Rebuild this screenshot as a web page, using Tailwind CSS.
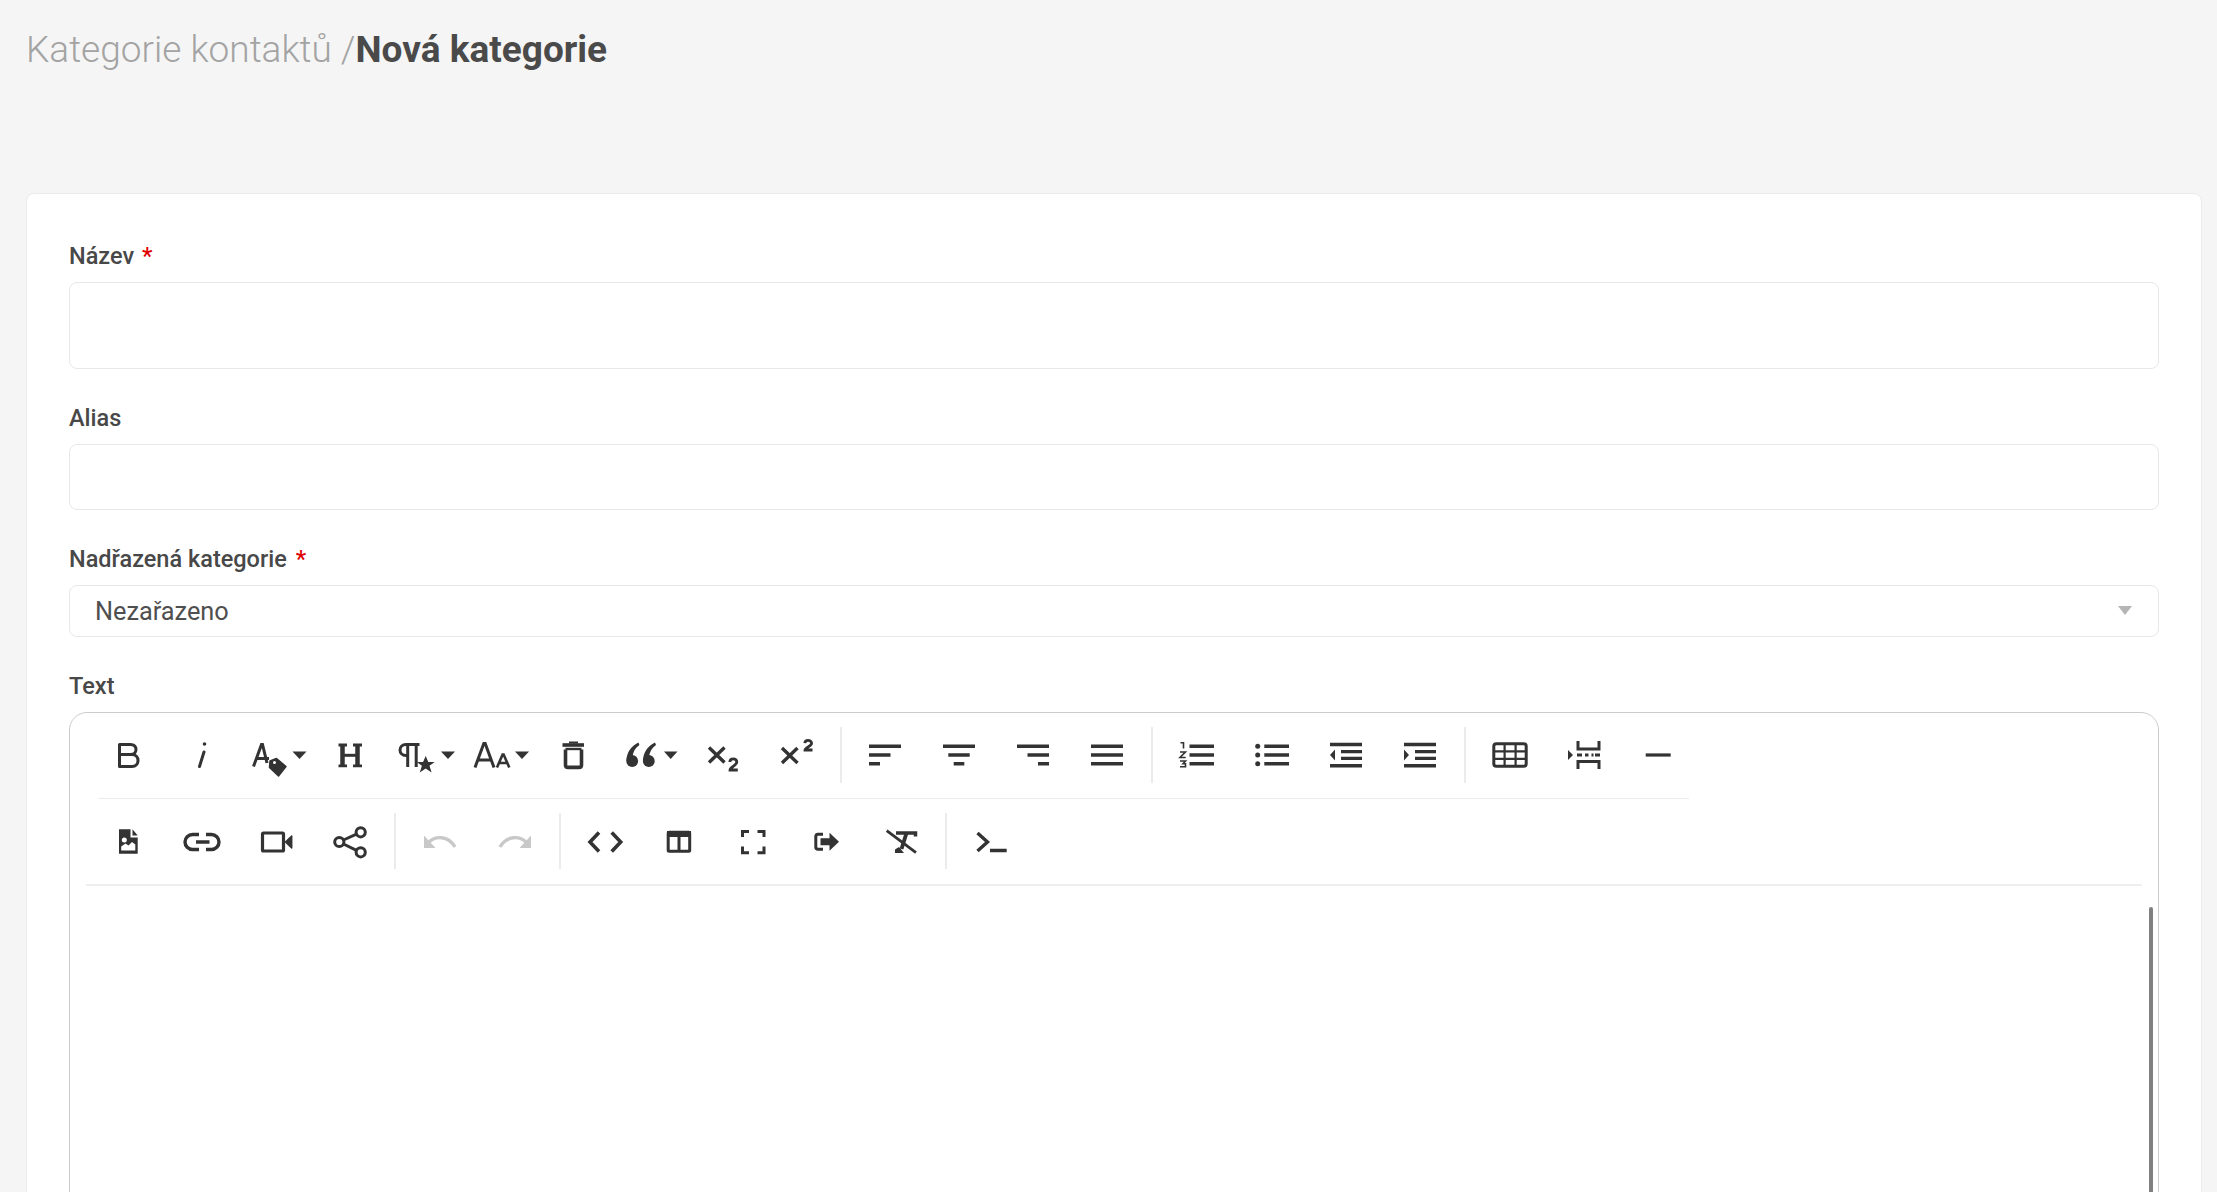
<!DOCTYPE html>
<html lang="cs">
<head>
<meta charset="utf-8">
<title>Nová kategorie</title>
<script src="https://cdn.jsdelivr.net/npm/@tailwindcss/browser@4"></script>
</head>
<body class="h-screen overflow-hidden bg-[#f5f5f5] font-['Roboto',sans-serif]">
<div class="h-[193px] pt-[27px] pl-[26px]">
  <h1 class="text-[37px] leading-[45px] font-light text-[#a3a3a3]">Kategorie kontaktů /<span class="font-bold text-[#4a4a4a]">Nová kategorie</span></h1>
</div>
<div class="ml-[26px] w-[2176px] h-[1200px] bg-white border border-[#ebebeb] rounded-lg px-[42px] pt-[49px]">
  <label class="block h-[26px] leading-[27px] text-[23.5px] font-medium text-[#484848] mb-[13px]">Název <span class="text-[#e00000] ml-[2px]">*</span></label>
  <input class="block w-full h-[87px] border border-[#e8e8e8] rounded-lg mb-[36px]" type="text">
  <label class="block h-[26px] leading-[27px] text-[23.5px] font-medium text-[#484848] mb-[13px]">Alias</label>
  <input class="block w-full h-[66px] border border-[#e8e8e8] rounded-lg mb-[36px]" type="text">
  <label class="block h-[26px] leading-[27px] text-[23.5px] font-medium text-[#484848] mb-[13px]">Nadřazená kategorie <span class="text-[#e00000] ml-[3px]">*</span></label>
  <div class="flex items-center justify-between w-full h-[52px] border border-[#e8e8e8] rounded-lg mb-[36px] pl-[25px] pr-[26px] text-[25.3px] text-[#4f4f4f]">
    <span class="mt-[2px]">Nezařazeno</span>
    <svg class="w-[14px] h-[9px] mt-[-1px]" viewBox="0 0 14 9"><path d="M0 0H14L7 9Z" fill="#b5b5b5"/></svg>
  </div>
  <label class="block h-[26px] leading-[27px] text-[23.5px] font-medium text-[#484848] mb-[13px]">Text</label>

  <div class="relative h-[900px] border border-[#cccccc] rounded-t-[18px] bg-white">
    <div class="mx-[16px] border-b-2 border-[#efefef]">
      <div class="ml-[12px] w-[1591px] border-b border-[#ebebeb]">
        <div class="flex h-[85px] pb-[2px] -ml-[8px] -mr-[16px] items-center">
          <!-- bold -->
          <div class="w-[74px] flex justify-center"><svg class="w-16 h-12" viewBox="-32 -24 64 48" fill="none" stroke="#333" stroke-width="3" stroke-linejoin="round"><path d="M-7.500 -10.500H3.500C7 -10.500 9 -8.300 9 -5.500S7 -.5 3.500 -.5H-7.500ZM3.500 -.5H5C8.800 -.5 11 2.200 11 5.500S8.800 11.500 5 11.500H-7.500V-.5"/></svg></div>
          <!-- italic -->
          <div class="w-[74px] flex justify-center"><svg class="w-16 h-12" viewBox="-32 -24 64 48" fill="none" stroke="#333" stroke-width="3" stroke-linecap="round"><path d="M3 -3 L-1.500 11.500"/><circle cx="3.500" cy="-11" r="1.800" fill="#333" stroke="none"/></svg></div>
          <!-- text color / tag -->
          <div class="w-[74px] flex justify-center"><svg class="w-16 h-12" viewBox="-32 -24 64 48" fill="none" stroke="#333" stroke-width="3"><path d="M-21.500 11.500L-13.500 -10.500H-12.500L-8 8M-18 3.500H-6"/><path d="M-5 6L1.500 3.500L11 11.500L3.500 21L-5.500 12.500Z" fill="#333" stroke="#333" stroke-width="1.500" stroke-linejoin="round"/><circle cx="-.5" cy="7.500" r="1.500" fill="#fff" stroke="none"/><path d="M17.500 -3.500H31.500L24.500 4Z" fill="#333" stroke="none"/></svg></div>
          <!-- heading -->
          <div class="w-[74px] flex justify-center"><svg class="w-16 h-12" viewBox="-32 -24 64 48" fill="none" stroke="#333"><path d="M-6.500 -10V10.500M8.500 -10V10.500" stroke-width="4.500"/><path d="M-6 .3H8" stroke-width="3"/><path d="M-10.500 -10H-2M4 -10H13M-10.500 10.800H-2M4 10.800H13" stroke-width="2.800"/></svg></div>
          <!-- paragraph star -->
          <div class="w-[74px] flex justify-center"><svg class="w-16 h-12" viewBox="-32 -24 64 48" fill="none" stroke="#333" stroke-width="3"><path d="M-3.500 -10.500H-17C-21 -10.500 -23 -7.500 -23 -5S-21 .5 -17 .5H-15.300M-15.300 -10.500V12M-6.800 -10.500V12" /><path d="M2.700 1L5.300 7H11.700L6.500 10.800L8.600 17.500L2.700 13.500L-3.200 17.500L-1.100 10.800L-6.300 7H.1Z" fill="#333" stroke="none"/><path d="M18 -3.500H32L25 4Z" fill="#333" stroke="none"/></svg></div>
          <!-- font size -->
          <div class="w-[76px] flex justify-center"><svg class="w-16 h-12" viewBox="-32 -24 64 48" fill="none" stroke="#333" stroke-width="3"><path d="M-23 12.500L-14.200 -11.500H-12.800L-4 12.500M-20 5H-7"/><path d="M-1 12.500L4.600 -.5H5.600L11.300 12.500M1 8H9.300" stroke-width="2.600"/><path d="M17 -3.500H31L24 4Z" fill="#333" stroke="none"/></svg></div>
          <!-- trash -->
          <div class="w-[74px] flex justify-center"><svg class="w-16 h-12" viewBox="-32 -24 64 48" fill="none" stroke="#333" stroke-width="3.600"><path d="M-10.500 -10H11" /><path d="M-4 -12.500H5" stroke-width="2"/><path d="M-7.500 -5.500V10C-7.500 11.800 -6.500 12.400 -5 12.400H6C7.500 12.400 8.500 11.800 8.500 10V-5.500" stroke-linejoin="round"/><path d="M-7.500 -6H8.500" stroke-width="2.400"/></svg></div>
          <!-- quote -->
          <div class="w-[75px] flex justify-center"><svg class="w-16 h-12" viewBox="-32 -24 64 48" fill="#333"><circle cx="-15.800" cy="6" r="5.900"/><circle cx=".8" cy="6" r="5.900"/><path d="M-21.600 6C-21.600 -2 -17 -9 -9.500 -12.500L-8.600 -10C-13 -7 -15 -3 -15.500 2Z"/><path d="M-5 6C-5 -2 -.4 -9 7 -12.500L8 -10C3.600 -7 1.600 -3 1 2Z"/><path d="M16 -3.500H29.500L22.700 4Z"/></svg></div>
          <!-- subscript -->
          <div class="w-[75px] flex justify-center"><svg class="w-16 h-12" viewBox="-32 -24 64 48" fill="none" stroke="#333" stroke-width="3.400"><path d="M-14 -7.500L1.500 7.500M1.500 -7.500L-14 7.500"/><path d="M6.800 7C7 4.500 8.500 3.800 10.300 3.800S13.800 5 13.800 7C13.800 10 7 12.500 7 15H14.800" stroke-width="2.800"/></svg></div>
          <!-- superscript -->
          <div class="w-[74px] flex justify-center"><svg class="w-16 h-12" viewBox="-32 -24 64 48" fill="none" stroke="#333" stroke-width="3.400"><path d="M-15 -7L.5 8M.5 -7L-15 8"/><path d="M7.800 -11.800C8 -14 9.200 -14.700 11 -14.700S14.600 -13.600 14.600 -11.800C14.600 -9 8 -7 8 -5H15.500" stroke-width="2.800"/></svg></div>

          <div class="w-[14px] flex justify-center"><div class="w-[2px] h-14 bg-[#ebebeb]"></div></div>

          <!-- align left -->
          <div class="w-[74px] flex justify-center"><svg class="w-16 h-12" viewBox="-32 -24 64 48" stroke="#333" stroke-width="3.400"><path d="M-16 -8.800H16M-16 0H5.500M-16 8.700H-5"/></svg></div>
          <div class="w-[74px] flex justify-center"><svg class="w-16 h-12" viewBox="-32 -24 64 48" stroke="#333" stroke-width="3.400"><path d="M-16 -8.800H16M-10.700 0H10.700M-5.300 8.700H5.300"/></svg></div>
          <div class="w-[74px] flex justify-center"><svg class="w-16 h-12" viewBox="-32 -24 64 48" stroke="#333" stroke-width="3.400"><path d="M-16 -8.800H16M-5.500 0H16M5 8.700H16"/></svg></div>
          <div class="w-[74px] flex justify-center"><svg class="w-16 h-12" viewBox="-32 -24 64 48" stroke="#333" stroke-width="3.400"><path d="M-16 -8.800H16M-16 0H16M-16 8.700H16"/></svg></div>

          <div class="w-[16px] flex justify-center"><div class="w-[2px] h-14 bg-[#ebebeb]"></div></div>

          <!-- ordered list -->
          <div class="w-[74px] flex justify-center"><svg class="w-16 h-12" viewBox="-32 -24 64 48" fill="none" stroke="#333" stroke-width="3.400"><path d="M-7.500 -8.800H17M-7.500 0H17M-7.500 8.700H17"/><path d="M-16.500 -12.300H-13.500V-6.500M-17 -3H-11.600L-17 2.500H-11.300M-17 6H-11.500L-14 8.800H-11.500V11.800H-17" stroke-width="1.600"/></svg></div>
          <!-- unordered list -->
          <div class="w-[74px] flex justify-center"><svg class="w-16 h-12" viewBox="-32 -24 64 48" fill="#333" stroke="#333" stroke-width="3.400"><path d="M-6.700 -8.800H18M-6.700 0H18M-6.700 8.700H18"/><circle cx="-13.300" cy="-8.800" r="2.500" stroke="none"/><circle cx="-13.300" cy="0" r="2.500" stroke="none"/><circle cx="-13.300" cy="8.700" r="2.500" stroke="none"/></svg></div>
          <!-- outdent -->
          <div class="w-[74px] flex justify-center"><svg class="w-16 h-12" viewBox="-32 -24 64 48" fill="#333" stroke="#333" stroke-width="3.400"><path d="M-15 -10.500H17M-4 -3.400H17M-4 3.400H17M-15 10.700H17"/><path d="M-10 -5.500V5.500L-15 0Z" stroke="none"/></svg></div>
          <!-- indent -->
          <div class="w-[74px] flex justify-center"><svg class="w-16 h-12" viewBox="-32 -24 64 48" fill="#333" stroke="#333" stroke-width="3.400"><path d="M-15 -10.500H17M-4 -3.400H17M-4 3.400H17M-15 10.700H17"/><path d="M-15 -5.500V5.500L-10 0Z" stroke="none"/></svg></div>

          <div class="w-[17px] flex justify-center"><div class="w-[2px] h-14 bg-[#ebebeb]"></div></div>

          <!-- table -->
          <div class="w-[74px] flex justify-center"><svg class="w-16 h-12" viewBox="-32 -24 64 48" fill="none" stroke="#333"><rect x="-16.200" y="-11.200" width="32.400" height="22.400" rx="2.500" stroke-width="3"/><path d="M-5.400 -11V11M5.600 -11V11M-16 -3.600H16M-16 3.800H16" stroke-width="2.200"/></svg></div>
          <!-- page break -->
          <div class="w-[74px] flex justify-center"><svg class="w-16 h-12" viewBox="-32 -24 64 48" fill="none" stroke="#333" stroke-width="3"><path d="M-6 -14V-6H15V-14M-6 14V6.500H15V14"/><path d="M-7 0H-2M1 0H4.500M7.500 0H9.500M11 0H16" stroke-width="3"/><path d="M-16 -5V5L-11 0Z" fill="#333" stroke="none"/></svg></div>
          <!-- hr -->
          <div class="w-[74px] flex justify-center"><svg class="w-16 h-12" viewBox="-32 -24 64 48" stroke="#333" stroke-width="3.200"><path d="M-12.300 0H12.700"/></svg></div>
        </div>
      </div>
      <div class="flex h-[85px] pb-[2px] pl-[5px] items-center">
        <!-- file image -->
        <div class="w-[74px] flex justify-center"><svg class="w-16 h-12 -translate-x-px" viewBox="-32 -24 64 48"><path d="M-8 -11.700H3.500V-3.500H10.700V12.800H-8Z" fill="#333"/><path d="M5.500 -11.700L10.700 -5.500H5.500Z" fill="#333"/><circle cx="-2.700" cy="-1" r="2.500" fill="#fff"/><path d="M-5.800 9.500V5.500L-1.500 2.500L1.500 4.500L5 1L8.300 3.500V9.500Z" fill="#fff"/></svg></div>
        <!-- link -->
        <div class="w-[74px] flex justify-center"><svg class="w-16 h-12 -translate-x-px" viewBox="-32 -24 64 48" fill="none" stroke="#333" stroke-width="3.400"><path d="M-2 -6.500H-8.500A7.500 7.500 0 0 0 -8.500 8.500H-2M5 -6.500H10.500A7.500 7.500 0 0 1 10.500 8.500H5M-5 1H8.500"/></svg></div>
        <!-- video -->
        <div class="w-[74px] flex justify-center"><svg class="w-16 h-12 -translate-x-px" viewBox="-32 -24 64 48" fill="none" stroke="#333" stroke-width="3.200"><rect x="-12.500" y="-8" width="21" height="18" rx="1"/><path d="M10.500 1L16.700 -5V7Z" fill="#333" stroke="#333" stroke-width="1.500" stroke-linejoin="round"/></svg></div>
        <!-- share -->
        <div class="w-[74px] flex justify-center"><svg class="w-16 h-12 -translate-x-px" viewBox="-32 -24 64 48" fill="none" stroke="#333" stroke-width="3"><circle cx="11.700" cy="-8.700" r="4.600"/><circle cx="-9.700" cy="1" r="4.600"/><circle cx="11.700" cy="11.300" r="4.600"/><path d="M-5.500 -1L7.500 -6.800M-5.500 3L7.500 9.300"/></svg></div>

        <div class="w-[16px] flex justify-center"><div class="w-[2px] h-14 bg-[#ebebeb]"></div></div>

        <!-- undo -->
        <div class="w-[74px] flex justify-center"><svg class="w-16 h-12" viewBox="-32 -24 64 48" fill="none" stroke="#c8c8c8" stroke-width="3.400"><path d="M-11 1C-5 -5 8 -6 15 6"/><path d="M-16 -5.500V7H-4.500Z" fill="#c8c8c8" stroke="none"/></svg></div>
        <!-- redo -->
        <div class="w-[74px] flex justify-center"><svg class="w-16 h-12" viewBox="-32 -24 64 48" fill="none" stroke="#c8c8c8" stroke-width="3.400"><path d="M12 1C6 -5 -7 -6 -14 6"/><path d="M17 -5.500V7H5.500Z" fill="#c8c8c8" stroke="none"/></svg></div>

        <div class="w-[17px] flex justify-center"><div class="w-[2px] h-14 bg-[#ebebeb]"></div></div>

        <!-- code -->
        <div class="w-[74px] flex justify-center"><svg class="w-16 h-12" viewBox="-32 -24 64 48" fill="none" stroke="#333" stroke-width="3.600"><path d="M-6 -8.500L-15 1L-6 10.500M6.700 -8.500L15.700 1L6.700 10.500"/></svg></div>
        <!-- table view -->
        <div class="w-[74px] flex justify-center"><svg class="w-16 h-12" viewBox="-32 -24 64 48" fill="none" stroke="#333" stroke-width="3"><rect x="-10.800" y="-8.800" width="21.500" height="19" rx="1"/><path d="M-12 -7H12" stroke-width="6"/><path d="M0 -6V10" stroke-width="3"/></svg></div>
        <!-- fullscreen -->
        <div class="w-[74px] flex justify-center"><svg class="w-16 h-12" viewBox="-32 -24 64 48" fill="none" stroke="#333" stroke-width="3"><path d="M-10.500 -4V-9.500H-4M4.500 -9.500H11V-4M11 5.500V11.800H4.500M-4 11.800H-10.500V5.500"/></svg></div>
        <!-- export -->
        <div class="w-[74px] flex justify-center"><svg class="w-16 h-12" viewBox="-32 -24 64 48" fill="none" stroke="#333" stroke-width="3"><path d="M-4 -6.800H-9C-10.300 -6.800 -11.200 -6 -11.200 -4.500V6C-11.200 7.500 -10.300 8.300 -9 8.300H-4"/><path d="M-6.500 -2.800H2.500V-8.300L12 .7L2.500 9.700V4.200H-6.500Z" fill="#333" stroke="none"/></svg></div>
        <!-- clear format -->
        <div class="w-[74px] flex justify-center"><svg class="w-16 h-12" viewBox="-32 -24 64 48" fill="none" stroke="#333"><path d="M-14.300 -10.300L15 11.700" stroke-width="2.800"/><path d="M-5 -8H14.500V-4.500" stroke-width="3.500"/><path d="M5.500 -8L.5 8" stroke-width="3.800"/><path d="M-6 12V8.500L-2 6L3 12Z" fill="#333" stroke="none"/></svg></div>

        <div class="w-[16px] flex justify-center"><div class="w-[2px] h-14 bg-[#ebebeb]"></div></div>

        <!-- terminal -->
        <div class="w-[74px] flex justify-center"><svg class="w-16 h-12" viewBox="-32 -24 64 48" fill="none" stroke="#333" stroke-width="3.400"><path d="M-13.500 -8L-3.500 1L-13.500 10M-1 9.500H15.700"/></svg></div>
      </div>
    </div>
    <div class="absolute left-[2079px] top-[194px] w-[4px] h-[600px] rounded-t-sm bg-[#808080]"></div>
  </div>
</div>
</body>
</html>
